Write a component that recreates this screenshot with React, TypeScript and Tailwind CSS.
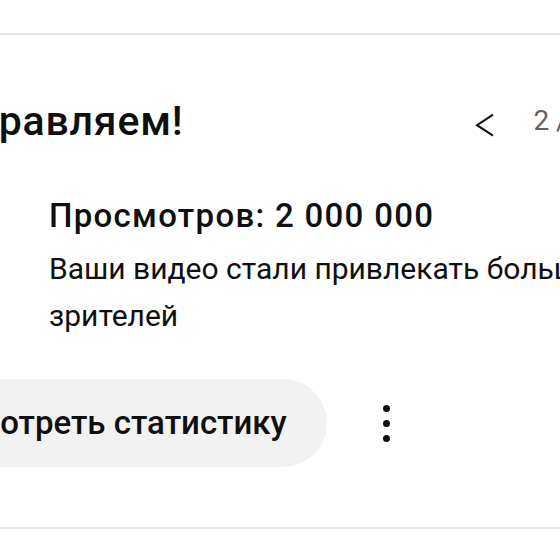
import React from "react";

export default function App() {
  return (
    <div className="w-[560px] h-[560px] overflow-hidden bg-white font-['Roboto',sans-serif] text-[#0f0f0f]">
      <div className="pt-[33px]">
        <div className="h-[2px] bg-[#e5e5e5]" />

        <div className="mt-[66px] flex h-[40px] items-center whitespace-nowrap">
          <h2 className="-ml-[103px] flex-none text-[41px] leading-[40px] font-medium tracking-[0.8px]">
            Поздравляем!
          </h2>
          <div className="ml-[292px] flex flex-none items-center">
            <svg width="20" height="40" viewBox="0 0 20 40" fill="none">
              <path
                d="M18 13.7L2 24.2L18 34.7"
                stroke="#0f0f0f"
                strokeWidth="2"
                strokeLinejoin="miter"
              />
            </svg>
            <span className="ml-[38px] text-[28px] leading-[40px] text-[#606060]">
              2 / 5
            </span>
          </div>
        </div>

        <div className="mt-[55px] pl-[49px]">
          <h3 className="text-[33px] leading-[40px] font-medium tracking-[1.3px] whitespace-nowrap">
            Просмотров: 2 000 000
          </h3>
          <p className="mt-[9px] w-[640px] text-[30px] leading-[47px]">
            Ваши видео стали привлекать больше зрителей
          </p>
        </div>

        <div className="mt-[40px] flex items-center whitespace-nowrap">
          <button className="-ml-[124px] flex h-[88px] flex-none items-center rounded-full bg-[#f2f2f2] pl-[40px] pr-[40px] text-[33px] font-medium">
            Посмотреть статистику
          </button>
          <button className="ml-[36px] flex h-[48px] w-[48px] flex-none flex-col items-center justify-center gap-[8px]">
            <span className="h-[7px] w-[7px] rounded-full bg-[#0f0f0f]" />
            <span className="h-[7px] w-[7px] rounded-full bg-[#0f0f0f]" />
            <span className="h-[7px] w-[7px] rounded-full bg-[#0f0f0f]" />
          </button>
        </div>

        <div className="mt-[60px] h-[2px] bg-[#e5e5e5]" />
      </div>
    </div>
  );
}
